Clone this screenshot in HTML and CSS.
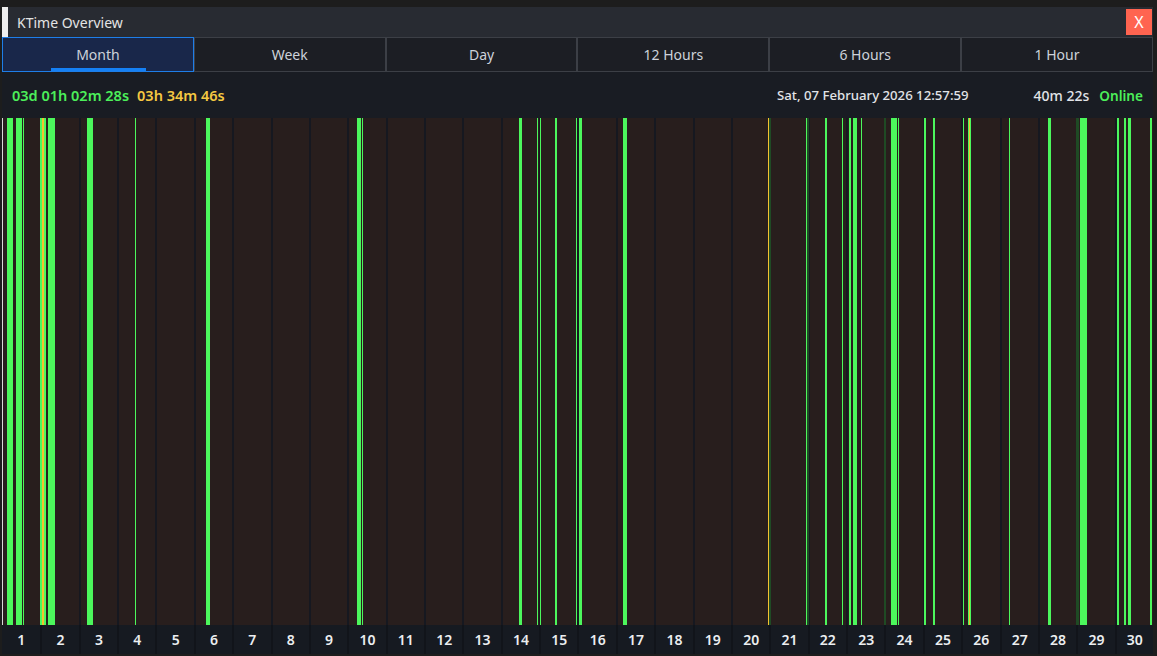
FILE: index.html
```html
<!DOCTYPE html>
<html>
<head>
<meta charset="utf-8">
<title>KTime Overview</title>
<link rel="stylesheet" href="styles.css">
</head>
<body>
<div class="window">
  <div class="titlebar">
    <div class="accent"></div>
    <div class="title">KTime Overview</div>
    <button class="close">X</button>
  </div>
  <div class="tabs">
    <div class="tab active">Month</div>
    <div class="tab">Week</div>
    <div class="tab">Day</div>
    <div class="tab">12 Hours</div>
    <div class="tab">6 Hours</div>
    <div class="tab">1 Hour</div>
  </div>
  <div class="status">
    <span class="online-time">03d 01h 02m 28s</span>
    <span class="afk-time">03h 34m 46s</span>
    <span class="date">Sat, 07 February 2026 12:57:59</span>
    <span class="session">40m 22s</span>
    <span class="state">Online</span>
  </div>
  <div class="chart">
    <div class="days">
      <div></div><div></div><div></div><div></div><div></div><div></div><div></div><div></div><div></div><div></div>
      <div></div><div></div><div></div><div></div><div></div><div></div><div></div><div></div><div></div><div></div>
      <div></div><div></div><div></div><div></div><div></div><div></div><div></div><div></div><div></div><div></div>
    </div>
    <div class="bar w" style="left:0px;width:1px"></div>
    <div class="bar g" style="left:5px;width:6px"></div>
    <div class="bar g" style="left:14px;width:6px"></div>
    <div class="bar g" style="left:21px;width:1px"></div>
    <div class="bar g" style="left:38px;width:6px"></div>
    <div class="bar y" style="left:40px;width:2px"></div>
    <div class="bar g" style="left:46px;width:7px"></div>
    <div class="bar g" style="left:85px;width:6px"></div>
    <div class="bar g" style="left:133px;width:1px"></div>
    <div class="bar g" style="left:204px;width:4px"></div>
    <div class="bar g" style="left:355px;width:4px"></div>
    <div class="bar g" style="left:360px;width:1px"></div>
    <div class="bar g" style="left:517px;width:3px"></div>
    <div class="bar g" style="left:535px;width:1px"></div>
    <div class="bar g" style="left:538px;width:1px"></div>
    <div class="bar g" style="left:553px;width:2px"></div>
    <div class="bar g" style="left:574px;width:1px"></div>
    <div class="bar g" style="left:577px;width:3px"></div>
    <div class="bar g" style="left:621px;width:4px"></div>
    <div class="bar y" style="left:766px;width:1px"></div>
    <div class="bar d" style="left:767px;width:2px"></div>
    <div class="bar g" style="left:804px;width:1px"></div>
    <div class="bar d" style="left:805px;width:2px"></div>
    <div class="bar g" style="left:823px;width:2px"></div>
    <div class="bar g" style="left:840px;width:1px"></div>
    <div class="bar g" style="left:847px;width:2px"></div>
    <div class="bar g" style="left:851px;width:4px"></div>
    <div class="bar g" style="left:859px;width:1px"></div>
    <div class="bar d" style="left:882px;width:2px"></div>
    <div class="bar g" style="left:889px;width:6px"></div>
    <div class="bar g" style="left:896px;width:1px"></div>
    <div class="bar g" style="left:922px;width:2px"></div>
    <div class="bar g" style="left:931px;width:2px"></div>
    <div class="bar g" style="left:961px;width:1px"></div>
    <div class="bar g" style="left:966px;width:3px"></div>
    <div class="bar y" style="left:967px;width:1px"></div>
    <div class="bar g" style="left:1007px;width:1px"></div>
    <div class="bar g" style="left:1046px;width:3px"></div>
    <div class="bar d" style="left:1074px;width:3px"></div>
    <div class="bar g" style="left:1078px;width:7px"></div>
    <div class="bar g" style="left:1115px;width:2px"></div>
    <div class="bar g" style="left:1122px;width:2px"></div>
    <div class="bar g" style="left:1126px;width:3px"></div>
    <div class="bar g" style="left:1148px;width:2px"></div>
  </div>
  <div class="axis">
    <div>1</div><div>2</div><div>3</div><div>4</div><div>5</div><div>6</div><div>7</div><div>8</div><div>9</div><div>10</div>
    <div>11</div><div>12</div><div>13</div><div>14</div><div>15</div><div>16</div><div>17</div><div>18</div><div>19</div><div>20</div>
    <div>21</div><div>22</div><div>23</div><div>24</div><div>25</div><div>26</div><div>27</div><div>28</div><div>29</div><div>30</div>
  </div>
</div>
</body>
</html>
```

FILE: styles.css
```css
html, body {
  margin: 0;
  padding: 0;
}
body {
  background: #1d1d1d;
  width: 1157px;
  height: 656px;
  overflow: hidden;
  font-family: "Noto Sans", "Liberation Sans", sans-serif;
}
.window {
  margin: 7px 0 0 2px;
  width: 1151px;
  background: #191c23;
}
.titlebar {
  height: 30px;
  background: #282b32;
  display: flex;
  align-items: center;
  position: relative;
}
.accent {
  width: 6px;
  align-self: stretch;
  background: #eeeeee;
}
.title {
  margin-left: 9px;
  color: #e4e4e4;
  font-size: 14px;
}
.close {
  margin-left: auto;
  margin-right: 1px;
  width: 26px;
  height: 26px;
  border: none;
  padding: 0;
  background: #ff6450;
  color: #ffffff;
  font-family: "Noto Sans", sans-serif;
  font-size: 16px;
  line-height: 26px;
}
.tabs {
  display: grid;
  grid-template-columns: repeat(6, 1fr);
  height: 35px;
}
.tab {
  box-sizing: border-box;
  border: 1px solid #3c3f46;
  background: #1c1e24;
  color: #cdd2da;
  font-size: 14px;
  display: flex;
  align-items: center;
  justify-content: center;
  position: relative;
}
.tab.active {
  background: #19274a;
  border-color: #1e7ee8;
}
.tab.active::after {
  content: "";
  position: absolute;
  left: 48px;
  width: 95px;
  bottom: 0;
  height: 3px;
  background: #1580f5;
}
.status {
  height: 46px;
  display: flex;
  align-items: center;
  padding: 0 10px;
  font-size: 14.5px;
  font-weight: 600;
}
.online-time {
  color: #4cef5a;
  margin-right: 8px;
}
.afk-time {
  color: #f5c842;
}
.date {
  margin-left: auto;
  color: #e2e4e8;
  font-weight: 500;
  font-size: 13.2px;
}
.session {
  margin-left: 65px;
  color: #e2e4e8;
  font-weight: 500;
  font-size: 14px;
}
.state {
  margin-left: 10px;
  color: #4cef5a;
  font-weight: 600;
  font-size: 13.6px;
}
.chart {
  position: relative;
  height: 507px;
  background: #281e1d;
  overflow: hidden;
}
.days {
  display: grid;
  grid-template-columns: repeat(30, 1fr);
  height: 100%;
}
.days > div {
  border-left: 2px solid #161820;
}
.days > div:first-child {
  border-left: none;
}
.bar {
  position: absolute;
  top: 0;
  bottom: 0;
}
.bar.g { background: #4cf75c; }
.bar.y { background: #f2c230; }
.bar.d { background: #1f4a24; }
.bar.w { background: #d8d8d8; }
.axis {
  display: grid;
  grid-template-columns: repeat(30, 1fr);
  height: 29px;
  background: #161a21;
}
.axis > div {
  border-left: 2px solid #11141a;
  color: #eceef0;
  font-size: 14px;
  font-weight: 600;
  display: flex;
  align-items: center;
  justify-content: center;
}
.axis > div:first-child {
  border-left: none;
}
```
